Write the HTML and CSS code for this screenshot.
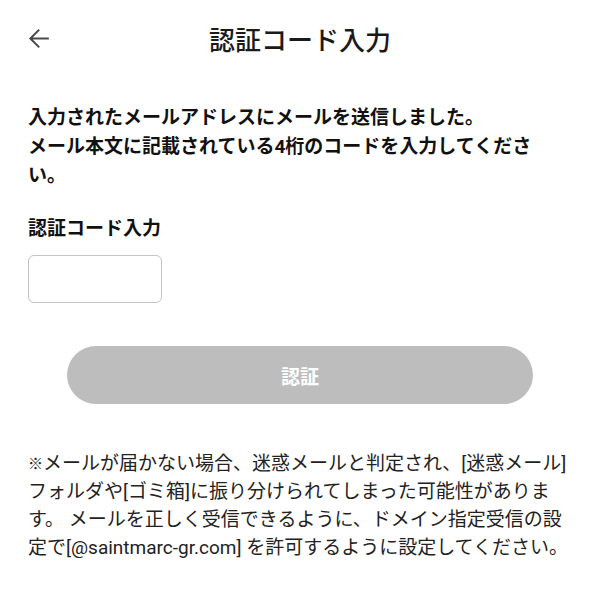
FILE: index.html
```html
<!DOCTYPE html>
<html lang="ja">
<head>
  <meta charset="UTF-8">
  <meta name="viewport" content="width=device-width, initial-scale=1.0">
  <title>認証コード入力</title>
  <link rel="stylesheet" href="styles.css">
</head>
<body>
  <header class="app-bar">
    <button class="back-button" aria-label="戻る">
      <svg width="31" height="31" viewBox="0 0 24 24">
        <path d="M20 11.2H7.6l5.5-5.5L12 4.6l-7.4 7.4 7.4 7.4 1.1-1.1-5.5-5.5H20v-1.6z" fill="#4a4a4a"/>
      </svg>
    </button>
    <h1>認証コード入力</h1>
  </header>

  <main class="content">
    <p class="lead">入力されたメールアドレスにメールを送信しました。<br>メール本文に記載されている4桁のコードを入力してください。</p>

    <label class="field-label" for="code">認証コード入力</label>
    <input class="code-input" id="code" type="text" inputmode="numeric" maxlength="4">

    <button class="submit" disabled>認証</button>

    <p class="note"><span class="mark">※</span>メールが届かない場合、迷惑メールと判定され、[迷惑メール]フォルダや[ゴミ箱]に振り分けられてしまった可能性があります。 メールを正しく受信できるように、ドメイン指定受信の設定で[@saintmarc-gr.com] を許可するように設定してください。</p>
  </main>
</body>
</html>
```

FILE: styles.css
```css
body {
  margin: 0;
  font-family: Roboto, "Noto Sans CJK JP", sans-serif;
  background-color: #fff;
  color: #222;
}

.app-bar {
  height: 80px;
  display: flex;
  align-items: center;
  justify-content: center;
  position: relative;
}

.back-button {
  position: absolute;
  left: 23px;
  top: 23px;
  padding: 0;
  border: none;
  background: none;
  line-height: 0;
  cursor: pointer;
}

.app-bar h1 {
  margin: 0 0 4px;
  font-size: 26px;
  font-weight: 500;
  color: #1a1a1a;
}

.content {
  padding: 23px 28px 0;
}

.lead {
  margin: 0 20px 0 0;
  font-size: 19px;
  font-weight: 700;
  line-height: 29px;
  color: #111;
}

.field-label {
  display: block;
  margin-top: 24px;
  font-size: 19px;
  font-weight: 700;
  line-height: 29px;
  color: #111;
}

.code-input {
  display: block;
  box-sizing: border-box;
  width: 134px;
  height: 48px;
  margin-top: 12px;
  border: 1.5px solid #c4c4c4;
  border-radius: 6px;
  font-size: 20px;
  padding: 0 10px;
}

.submit {
  display: block;
  width: 466px;
  height: 58px;
  margin: 43px auto 0;
  border: none;
  border-radius: 29px;
  background-color: #bdbdbd;
  color: #fff;
  font-family: inherit;
  font-size: 19px;
  font-weight: 700;
}

.note {
  margin: 46px 0 0;
  font-size: 19px;
  line-height: 28px;
  color: #222;
}

.mark {
  font-size: 15px;
  vertical-align: 1px;
}
```
